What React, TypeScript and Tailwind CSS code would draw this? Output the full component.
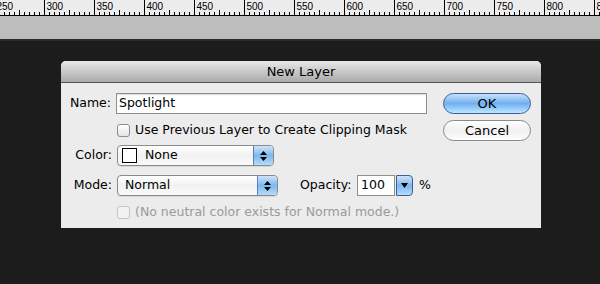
import React from "react"

const font = { fontFamily: '"DejaVu Sans", "Lucida Grande", sans-serif' }

function Ruler() {
  const ticks: React.ReactNode[] = []
  for (let x = -5.5; x < 610; x += 5) {
    const step = Math.round((x + 5.5) / 5) % 10
    const h = step === 0 ? 15 : step === 5 ? 5 : 3
    ticks.push(<line key={x} x1={x} x2={x} y1={15} y2={15 - h} stroke="#000" strokeWidth={1} />)
  }
  const labels: React.ReactNode[] = []
  for (let k = -1; k <= 11; k++) {
    labels.push(
      <text key={k} x={-3.5 + 50 * (k + 1)} y={10} fontSize={10} fill="#000" fontFamily="Liberation Sans, sans-serif">
        {300 + 50 * k}
      </text>
    )
  }
  return (
    <svg width={600} height={16} className="block bg-[#ececec]">
      {ticks}
      {labels}
      <line x1={0} x2={600} y1={15.5} y2={15.5} stroke="#000" />
    </svg>
  )
}

function Checkbox({ disabled }: { disabled?: boolean }) {
  return (
    <div
      className={`w-[13px] h-[13px] rounded-[3px] border ${
        disabled ? "border-[#c4c4c4] bg-[#f2f2f2]" : "border-[#8d8d8d] bg-gradient-to-b from-white to-[#e4e4e4]"
      }`}
    />
  )
}

function Arrows() {
  return (
    <div className="w-[20px] h-full flex flex-col items-center justify-center gap-[2px] rounded-r-[4px] border-l border-[#5b7fb8] bg-gradient-to-b from-[#cfe3f8] via-[#7db7ef] to-[#b6dcfb]">
      <svg width="7" height="4" viewBox="0 0 7 4"><path d="M3.5 0 L7 4 L0 4 Z" fill="#000" /></svg>
      <svg width="7" height="4" viewBox="0 0 7 4"><path d="M0 0 L7 0 L3.5 4 Z" fill="#000" /></svg>
    </div>
  )
}

function Popup({ width, children }: { width: string; children: React.ReactNode }) {
  return (
    <div className={`${width} h-[21px] flex items-center rounded-[4px] border border-[#8a8a8a] bg-gradient-to-b from-white via-[#f1f1f1] to-[#fafafa] shadow-[0_1px_0_rgba(0,0,0,0.08)]`}>
      <div className="flex-1 flex items-center min-w-0">{children}</div>
      <Arrows />
    </div>
  )
}

function AquaButton({ primary, children }: { primary?: boolean; children: React.ReactNode }) {
  return (
    <div
      className={`h-[21px] w-[88px] rounded-full border flex items-center justify-center text-[13px] text-black ${
        primary
          ? "border-[#3c5e9c] bg-gradient-to-b from-[#c8e0f8] via-[#6fb0f0] to-[#bfe6ff]"
          : "border-[#8a8a8a] bg-gradient-to-b from-white via-[#f0f0f0] to-[#fdfdfd]"
      }`}
    >
      {children}
    </div>
  )
}

export default function App() {
  return (
    <div className="w-[600px] h-[284px] bg-[#1c1c1c] overflow-hidden text-[12.5px] text-black" style={font}>
      <Ruler />
      <div className="h-[25px] bg-[#bdbdbd] border-b-2 border-[#2a2a2a]" />
      <div className="pt-[20px] pl-[61px]">
        <div className="w-[480px] h-[167px] bg-[#ececec] rounded-t-[5px] overflow-hidden flex flex-col">
          <div className="h-[22px] flex items-center justify-center bg-gradient-to-b from-[#e8e8e8] to-[#aaaaaa] border-b border-[#555555] text-[13px]">
            New Layer
          </div>
          <div className="flex pt-[10px] pr-[10px]">
            <div className="flex flex-col">
              <div className="h-[21px] flex items-center">
                <span className="w-[55px] text-right pr-[5px]">Name:</span>
                <div className="w-[311px] h-[21px] border border-[#8e8e8e] bg-white flex items-center pl-[2px] shadow-[inset_0_1px_1px_rgba(0,0,0,0.15)]">
                  Spotlight
                </div>
              </div>
              <div className="h-[20px] mt-[6px] flex items-center pl-[56px] gap-[5px]">
                <Checkbox />
                <span>Use Previous Layer to Create Clipping Mask</span>
              </div>
              <div className="h-[21px] mt-[5px] flex items-center">
                <span className="w-[56px] text-right pr-[5px]">Color:</span>
                <Popup width="w-[157px]">
                  <div className="ml-[4px] w-[15px] h-[15px] border border-black bg-white" />
                  <span className="ml-[8px]">None</span>
                </Popup>
              </div>
              <div className="h-[21px] mt-[9px] flex items-center">
                <span className="w-[56px] text-right pr-[5px]">Mode:</span>
                <Popup width="w-[161px]">
                  <span className="ml-[7px]">Normal</span>
                </Popup>
                <span className="ml-[22px] w-[52px]">Opacity:</span>
                <div className="ml-[5px] w-[38px] h-[21px] border border-[#8e8e8e] bg-white flex items-center pl-[3px]">100</div>
                <div className="ml-[1px] w-[17px] h-[21px] rounded-r-[4px] border border-[#3c5e9c] flex items-center justify-center bg-gradient-to-b from-[#cfe3f8] via-[#7db7ef] to-[#b6dcfb]">
                  <svg width="7" height="5" viewBox="0 0 7 5"><path d="M0 0 L7 0 L3.5 5 Z" fill="#000" /></svg>
                </div>
                <span className="ml-[6px]">%</span>
              </div>
              <div className="h-[20px] mt-[6px] flex items-center pl-[56px] gap-[5px] text-[#9a9a9a]">
                <Checkbox disabled />
                <span>(No neutral color exists for Normal mode.)</span>
              </div>
            </div>
            <div className="ml-auto flex flex-col gap-[6px]">
              <AquaButton primary>OK</AquaButton>
              <AquaButton>Cancel</AquaButton>
            </div>
          </div>
        </div>
      </div>
    </div>
  )
}
